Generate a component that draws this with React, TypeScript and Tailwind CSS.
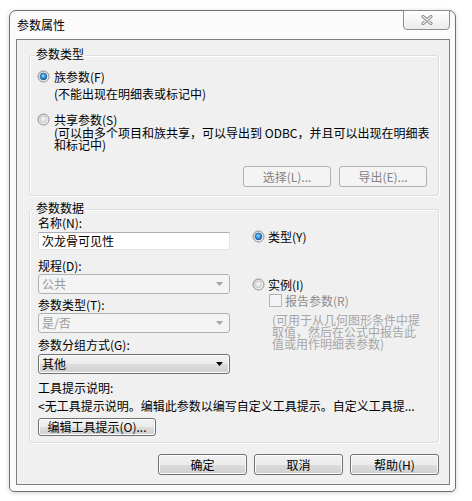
import React from "react";

function Radio({ checked, id }: { checked?: boolean; id: string }) {
  return (
    <svg width="13" height="13" viewBox="0 0 13 13" className="shrink-0">
      <defs>
        <linearGradient id={`${id}-ring`} x1="0" y1="0" x2="1" y2="1">
          <stop offset="0" stopColor="#cfcfcf" />
          <stop offset="1" stopColor="#ffffff" />
        </linearGradient>
        <radialGradient id={`${id}-dot`} cx="45%" cy="40%" r="65%">
          {checked ? (
            <>
              <stop offset="0" stopColor="#8fe1ff" />
              <stop offset="0.55" stopColor="#2a8fd8" />
              <stop offset="1" stopColor="#0c4d96" />
            </>
          ) : (
            <>
              <stop offset="0" stopColor="#f7f7f7" />
              <stop offset="1" stopColor="#d2d2d2" />
            </>
          )}
        </radialGradient>
      </defs>
      <circle cx="6.5" cy="6.5" r="5.5" fill={`url(#${id}-ring)`} stroke="#8e8f8f" strokeWidth="1" />
      <circle
        cx="6.5"
        cy="6.5"
        r="3.4"
        fill={`url(#${id}-dot)`}
        stroke={checked ? "#245c9d" : "#c4c4c4"}
        strokeWidth="0.6"
      />
    </svg>
  );
}

function Button({
  children,
  disabled,
  className = "",
}: {
  children: React.ReactNode;
  disabled?: boolean;
  className?: string;
}) {
  if (disabled) {
    return (
      <div
        className={`flex items-center justify-center rounded-[3px] border border-[#adb2b5] bg-[#f4f4f4] text-[#838383] ${className}`}
      >
        {children}
      </div>
    );
  }
  return (
    <div
      className={`flex items-center justify-center rounded-[3px] border border-[#707070] bg-[linear-gradient(#f2f2f2_0%,#ebebeb_50%,#dddddd_50%,#cfcfcf_100%)] shadow-[inset_0_0_0_1px_#fcfcfc] text-black ${className}`}
    >
      {children}
    </div>
  );
}

function Select({ value, disabled }: { value: string; disabled?: boolean }) {
  return (
    <div
      className={`flex h-[20px] w-[192px] items-center justify-between rounded-[3px] border pl-[3px] pr-[6px] ${
        disabled
          ? "border-[#adb2b5] bg-[#f4f4f4] text-[#9a9a9a]"
          : "border-[#707070] bg-[linear-gradient(#f2f2f2_0%,#ebebeb_50%,#dddddd_50%,#cfcfcf_100%)] shadow-[inset_0_0_0_1px_#fcfcfc] text-black"
      }`}
    >
      <span>{value}</span>
      <svg width="7" height="4" viewBox="0 0 7 4">
        <path d="M0 0 H7 L3.5 4 Z" fill={disabled ? "#a5a5a5" : "#000"} />
      </svg>
    </div>
  );
}

function GroupBox({
  label,
  className = "",
  children,
}: {
  label: string;
  className?: string;
  children: React.ReactNode;
}) {
  return (
    <div
      className={`relative ml-[12px] w-[410px] rounded-[3px] border border-[#d5dfe5] shadow-[inset_1px_1px_0_#ffffff,1px_1px_0_#ffffff] ${className}`}
    >
      <span className="absolute left-[5px] top-[-8px] bg-[#f0f0f0] px-[1px] leading-[12px]">
        {label}
      </span>
      {children}
    </div>
  );
}

export default function App() {
  return (
    <div className="h-[501px] w-[472px] bg-white pl-[9px] pt-[10px] font-['Noto_Sans_CJK_SC',sans-serif] text-[12px] leading-[12px] text-black">
      <div className="relative flex h-[482px] w-[447px] flex-col rounded-b-[5px] rounded-t-[7px] border border-[#707070] bg-[#fbfbfb] pl-[6px] pr-[5px] shadow-[0_1px_5px_rgba(0,0,0,0.18)]">
        {/* title bar */}
        <div className="h-[28px] pl-[1px] pt-[8px]">参数属性</div>
        <div className="absolute right-[5px] top-[-1px] flex h-[20px] w-[47px] items-center justify-center rounded-b-[4px] border border-[#8d8d8d] bg-[linear-gradient(#ffffff,#ececec)]">
          <svg width="12" height="10" viewBox="0 0 12 10">
            <path d="M2 1.5 L10 8.5 M10 1.5 L2 8.5" stroke="#8a8a8a" strokeWidth="3.2" strokeLinecap="round" />
            <path d="M2 1.5 L10 8.5 M10 1.5 L2 8.5" stroke="#f4f4f4" strokeWidth="1.2" strokeLinecap="round" />
          </svg>
        </div>

        {/* client area */}
        <div className="flex h-[446px] w-[434px] flex-col border border-[#7f7f7f] bg-[#f0f0f0]">
          <GroupBox label="参数类型" className="mt-[15px] h-[141px]">
            <div className="ml-[7px] mt-[14px] flex h-[13px] items-center gap-[4px]">
              <Radio checked id="r1" />
              <span>族参数(F)</span>
            </div>
            <div className="ml-[24px] mt-[5px] h-[12px]">(不能出现在明细表或标记中)</div>
            <div className="ml-[7px] mt-[13px] flex h-[13px] items-center gap-[4px]">
              <Radio id="r2" />
              <span>共享参数(S)</span>
            </div>
            <div className="ml-[24px] mt-[1px] leading-[12px]">
              (可以由多个项目和族共享，可以导出到 ODBC，并且可以出现在明细表
              <br />
              和标记中)
            </div>
            <div className="mr-[11px] mt-[15px] flex justify-end gap-[8px]">
              <Button disabled className="h-[21px] w-[88px]">
                选择(L)...
              </Button>
              <Button disabled className="h-[21px] w-[88px]">
                导出(E)...
              </Button>
            </div>
          </GroupBox>

          <GroupBox label="参数数据" className="mt-[13px] h-[234px]">
            <div className="flex">
              <div className="ml-[8px] flex w-[192px] flex-col">
                <div className="mt-[7px] h-[12px]">名称(N):</div>
                <div className="mt-[3px] flex h-[18px] items-center border border-[#e2e3ea] border-t-[#abadb3] bg-white pl-[3px]">
                  次龙骨可见性
                </div>
                <div className="mt-[10px] h-[12px]">规程(D):</div>
                <div className="mt-[2px]">
                  <Select value="公共" disabled />
                </div>
                <div className="mt-[5px] h-[12px]">参数类型(T):</div>
                <div className="mt-[2px]">
                  <Select value="是/否" disabled />
                </div>
                <div className="mt-[6px] h-[12px]">参数分组方式(G):</div>
                <div className="mt-[3px]">
                  <Select value="其他" />
                </div>
              </div>
              <div className="ml-[22px] mt-[20px] flex flex-col">
                <div className="flex h-[13px] items-center gap-[3px]">
                  <Radio checked id="r3" />
                  <span>类型(Y)</span>
                </div>
                <div className="mt-[35px] flex h-[13px] items-center gap-[3px]">
                  <Radio id="r4" />
                  <span>实例(I)</span>
                </div>
                <div className="ml-[17px] mt-[3px] flex h-[13px] items-center gap-[3px] text-[#8d8d8d]">
                  <div className="h-[13px] w-[13px] border border-[#b4b4b4] bg-[#f4f4f4]" />
                  <span>报告参数(R)</span>
                </div>
                <div className="ml-[20px] mt-[7px] leading-[12px] text-[#a6a6a6]">
                  (可用于从几何图形条件中提
                  <br />
                  取值，然后在公式中报告此
                  <br />
                  值或用作明细表参数)
                </div>
              </div>
            </div>
            <div className="ml-[8px] mt-[8px] h-[12px]">工具提示说明:</div>
            <div className="ml-[8px] mt-[6px] h-[12px] whitespace-nowrap">
              &lt;无工具提示说明。编辑此参数以编写自定义工具提示。自定义工具提...
            </div>
            <Button className="ml-[8px] mt-[6px] h-[18px] w-[118px]">编辑工具提示(O)...</Button>
          </GroupBox>

          <div className="ml-[141px] mt-[11px] flex gap-[7px]">
            <Button className="h-[21px] w-[89px]">确定</Button>
            <Button className="h-[21px] w-[89px]">取消</Button>
            <Button className="h-[21px] w-[89px]">帮助(H)</Button>
          </div>
        </div>
      </div>
    </div>
  );
}
